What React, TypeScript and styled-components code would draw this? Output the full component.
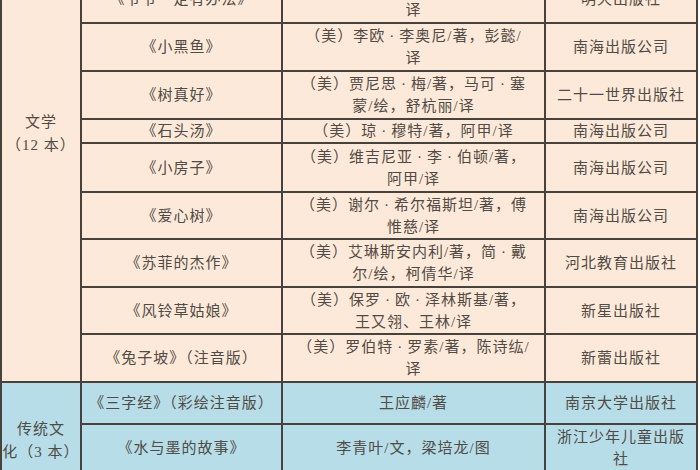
import React from 'react';
import styled, { createGlobalStyle } from 'styled-components';

type Book = {
  title: string;
  author: string;
  press: string;
  height: number;
};

type Category = {
  name: string;
  tone: 'peach' | 'blue';
  shift: string;
  books: Book[];
};

const categories: Category[] = [
  {
    name: '文学\n（12 本）',
    tone: 'peach',
    shift: '0 0 89px 0',
    books: [
      { title: '《爷爷一定有办法》', author: '（美）菲比·吉尔曼/著，宋珮/\n译', press: '明天出版社', height: 48 },
      { title: '《小黑鱼》', author: '（美）李欧·李奥尼/著，彭懿/\n译', press: '南海出版公司', height: 48 },
      { title: '《树真好》', author: '（美）贾尼思·梅/著，马可·塞\n蒙/绘，舒杭丽/译', press: '二十一世界出版社', height: 48 },
      { title: '《石头汤》', author: '（美）琼·穆特/著，阿甲/译', press: '南海出版公司', height: 24 },
      { title: '《小房子》', author: '（美）维吉尼亚·李·伯顿/著，\n阿甲/译', press: '南海出版公司', height: 49 },
      { title: '《爱心树》', author: '（美）谢尔·希尔福斯坦/著，傅\n惟慈/译', press: '南海出版公司', height: 47 },
      { title: '《苏菲的杰作》', author: '（美）艾琳斯安内利/著，简·戴\n尔/绘，柯倩华/译', press: '河北教育出版社', height: 48 },
      { title: '《风铃草姑娘》', author: '（美）保罗·欧·泽林斯基/著，\n王又翎、王林/译', press: '新星出版社', height: 47 },
      { title: '《兔子坡》（注音版）', author: '（美）罗伯特·罗素/著，陈诗纮/\n译', press: '新蕾出版社', height: 48 },
    ],
  },
  {
    name: '传统文\n化（3 本）',
    tone: 'blue',
    shift: '28px 0 0 0',
    books: [
      { title: '《三字经》（彩绘注音版）', author: '王应麟/著', press: '南京大学出版社', height: 42 },
      { title: '《水与墨的故事》', author: '李青叶/文，梁培龙/图', press: '浙江少年儿童出版\n社', height: 48 },
    ],
  },
];

// the source renders the name dot full width, so give it room
const withDots = (text: string) =>
  text.split('·').map((part, i) => (
    <React.Fragment key={i}>
      {i > 0 && <Dot>·</Dot>}
      {part}
    </React.Fragment>
  ));

const GlobalStyle = createGlobalStyle`
  html, body {
    margin: 0;
    padding: 0;
    background: #ffffff;
    overflow: hidden;
  }
  body {
    font-family: "Liberation Serif", "Noto Sans CJK SC", serif;
  }
`;

const App = () => {
  return (
    <>
      <GlobalStyle />
      <Table>
        {categories.map((cat) => (
          <Group
            key={cat.name}
            $tone={cat.tone}
            $rows={cat.books.map((b) => `${b.height}px`).join(' ')}
          >
            <CategoryCell $shift={cat.shift}>{cat.name}</CategoryCell>
            {cat.books.map((book) => (
              <React.Fragment key={book.title}>
                <Cell>{book.title}</Cell>
                <Cell>
                  <span>{withDots(book.author)}</span>
                </Cell>
                <Cell>{book.press}</Cell>
              </React.Fragment>
            ))}
          </Group>
        ))}
      </Table>
    </>
  );
};

export default App;

const Table = styled.div`
  width: 698px;
  margin-top: -24px;
  border-left: 2px solid #48423d;
  box-sizing: border-box;
  display: flex;
  flex-direction: column;
`;

const Group = styled.div<{ $tone: 'peach' | 'blue'; $rows: string }>`
  display: grid;
  grid-template-columns: 80px 201px 263px 152px;
  grid-template-rows: ${({ $rows }) => $rows};
  background-color: ${({ $tone }) => ($tone === 'peach' ? '#fde9d9' : '#b6dde8')};
`;

const Cell = styled.div`
  box-sizing: border-box;
  display: flex;
  align-items: center;
  justify-content: center;
  text-align: center;
  white-space: pre-line;
  border-right: 2px solid #48423d;
  border-bottom: 2px solid #48423d;
  color: #514b45;
  font-size: 15px;
  letter-spacing: 1px;
  line-height: 22px;
  overflow: hidden;
`;

const Dot = styled.span`
  margin: 0 4px;
`;

const CategoryCell = styled(Cell)<{ $shift: string }>`
  grid-column: 1;
  grid-row: 1 / -1;
  padding: ${({ $shift }) => $shift};
  line-height: 23px;
`;
